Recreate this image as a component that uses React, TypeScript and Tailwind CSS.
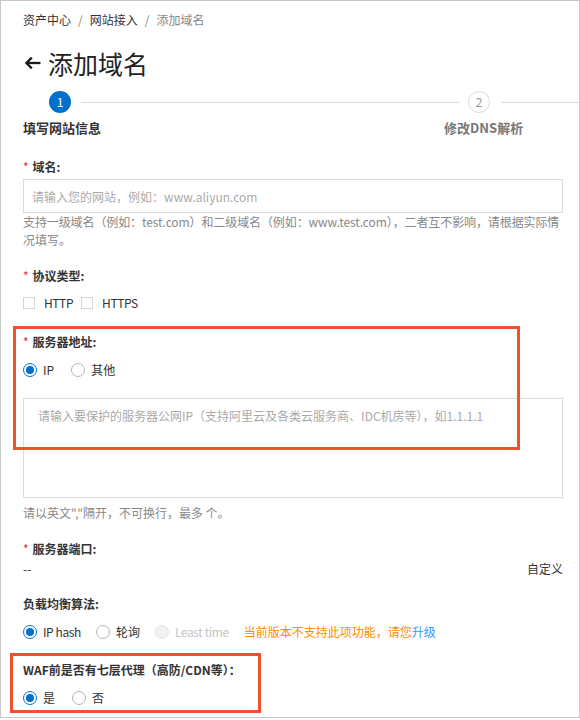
import React from 'react'

function Radio({ checked = false, disabled = false }: { checked?: boolean; disabled?: boolean }) {
  if (checked) {
    return (
      <span className="w-[14px] h-[14px] rounded-full border border-[#0070cc] bg-white flex items-center justify-center shrink-0">
        <span className="w-[8px] h-[8px] rounded-full bg-[#0070cc]" />
      </span>
    )
  }
  return (
    <span
      className={`w-[14px] h-[14px] rounded-full border shrink-0 ${
        disabled ? 'border-[#e4e4e4] bg-[#f2f2f2]' : 'border-[#b5b5b5] bg-white'
      }`}
    />
  )
}

function Label({ required, children }: { required?: boolean; children: React.ReactNode }) {
  return (
    <div className="h-[20px] leading-[20px] text-[12px] font-bold text-[#333] flex items-center">
      {required && <span className="text-[#e62e2e] mr-[4px] font-normal">*</span>}
      {children}
    </div>
  )
}

export default function App() {
  return (
    <div className="relative w-[580px] h-[718px] border border-[#c8c8c8] overflow-hidden bg-white pl-[22px] pr-[16px] font-['Noto_Sans_CJK_SC',sans-serif] text-[#333]">
      {/* Breadcrumb */}
      <div className="pt-[9px] h-[29px] leading-[20px] text-[12px] flex items-center">
        <span className="text-[#333]">资产中心</span>
        <span className="mx-[7px] text-[#888]">/</span>
        <span className="text-[#333]">网站接入</span>
        <span className="mx-[7px] text-[#888]">/</span>
        <span className="text-[#888]">添加域名</span>
      </div>

      {/* Title */}
      <div className="mt-[17px] h-[32px] flex items-center">
        <svg className="w-[17px] h-[14px] ml-[1px]" viewBox="0 0 17 14" fill="none" stroke="#1a1a1a" strokeWidth={2.3}>
          <path d="M16.5 7H2.5" />
          <path d="M7.8 1.6L2.4 7l5.4 5.4" />
        </svg>
        <span className="ml-[7px] text-[25px] leading-[32px] text-[#222]">添加域名</span>
      </div>

      {/* Steps */}
      <div className="mt-[12px] -mr-[16px] h-[22px] flex items-center">
        <span className="ml-[26px] w-[22px] h-[22px] rounded-full bg-[#0070cc] text-white text-[12px] flex items-center justify-center shrink-0">
          1
        </span>
        <span className="ml-[10px] w-[379px] h-px bg-[#dcdcdc] shrink-0" />
        <span className="ml-[8px] w-[22px] h-[22px] rounded-full border border-[#dcdcdc] text-[#999] text-[12px] flex items-center justify-center shrink-0">
          2
        </span>
        <span className="ml-[11px] w-[120px] h-px bg-[#dcdcdc] shrink-0" />
      </div>
      <div className="mt-[5px] h-[20px] leading-[20px] text-[13px] font-bold flex">
        <span className="text-[#333]">填写网站信息</span>
        <span className="ml-[343px] text-[#777]">修改DNS解析</span>
      </div>

      {/* 域名 */}
      <div className="mt-[19px]">
        <Label required>域名:</Label>
      </div>
      <input
        className="mt-[2px] w-[540px] h-[34px] border border-[#dcdcdc] px-[8px] text-[12px] outline-none placeholder:text-[#aaa]"
        placeholder="请输入您的网站，例如：www.aliyun.com"
      />
      <p className="w-[540px] text-[12px] leading-[18px] text-[#888]">
        <span className="whitespace-nowrap tracking-[-0.1px]">
          支持一级域名（例如：test.com）和二级域名（例如：www.test.com），二者互不影响，请根据实际情
        </span>
        <br />
        况填写。
      </p>

      {/* 协议类型 */}
      <div className="mt-[17px]">
        <Label required>协议类型:</Label>
      </div>
      <div className="mt-[7px] h-[20px] flex items-center text-[12px] tracking-[-0.4px]">
        <span className="w-[12px] h-[12px] border border-[#d6d6d6] shrink-0" />
        <span className="ml-[9px] mr-[8px]">HTTP</span>
        <span className="w-[12px] h-[12px] border border-[#d6d6d6] shrink-0" />
        <span className="ml-[9px]">HTTPS</span>
      </div>

      {/* 服务器地址 */}
      <div className="mt-[19px]">
        <Label required>服务器地址:</Label>
      </div>
      <div className="mt-[8px] h-[20px] flex items-center text-[12px]">
        <Radio checked />
        <span className="ml-[6px] mr-[17px]">IP</span>
        <Radio />
        <span className="ml-[6px]">其他</span>
      </div>
      <textarea
        className="mt-[18px] block w-[540px] h-[100px] border border-[#dcdcdc] px-[14px] py-[8px] text-[12px] leading-[18px] resize-none outline-none placeholder:text-[#aaa]"
        placeholder="请输入要保护的服务器公网IP（支持阿里云及各类云服务商、IDC机房等），如1.1.1.1"
      />
      <p className="mt-[6px] text-[12px] leading-[18px] text-[#888]">请以英文","隔开，不可换行，最多&nbsp;个。</p>

      {/* 服务器端口 */}
      <div className="mt-[17px]">
        <Label required>服务器端口:</Label>
      </div>
      <div className="w-[540px] h-[20px] leading-[20px] flex justify-between text-[12px]">
        <span>--</span>
        <span>自定义</span>
      </div>

      {/* 负载均衡算法 */}
      <div className="mt-[15px]">
        <Label>负载均衡算法:</Label>
      </div>
      <div className="mt-[8px] h-[20px] flex items-center text-[12px]">
        <Radio checked />
        <span className="ml-[6px] mr-[15px] tracking-[-0.4px]">IP hash</span>
        <Radio />
        <span className="ml-[6px] mr-[15px]">轮询</span>
        <Radio disabled />
        <span className="ml-[6px] tracking-[-0.4px] text-[#c4c4c4]">Least time</span>
        <span className="ml-[15px] text-[#ff8a00]">
          当前版本不支持此项功能，请您<span className="text-[#3399ff]">升级</span>
        </span>
      </div>

      {/* WAF */}
      <div className="mt-[18px]">
        <Label>WAF前是否有七层代理（高防/CDN等）：</Label>
      </div>
      <div className="mt-[8px] h-[20px] flex items-center text-[12px]">
        <Radio checked />
        <span className="ml-[6px] mr-[17px]">是</span>
        <Radio />
        <span className="ml-[6px]">否</span>
      </div>

      {/* Highlight boxes */}
      <div className="absolute left-[12px] top-[325px] w-[507px] h-[124px] border-[3px] border-[#f0522f] pointer-events-none" />
      <div className="absolute left-[9px] top-[652px] w-[251px] h-[60px] border-[3px] border-[#f0522f] pointer-events-none" />
    </div>
  )
}
